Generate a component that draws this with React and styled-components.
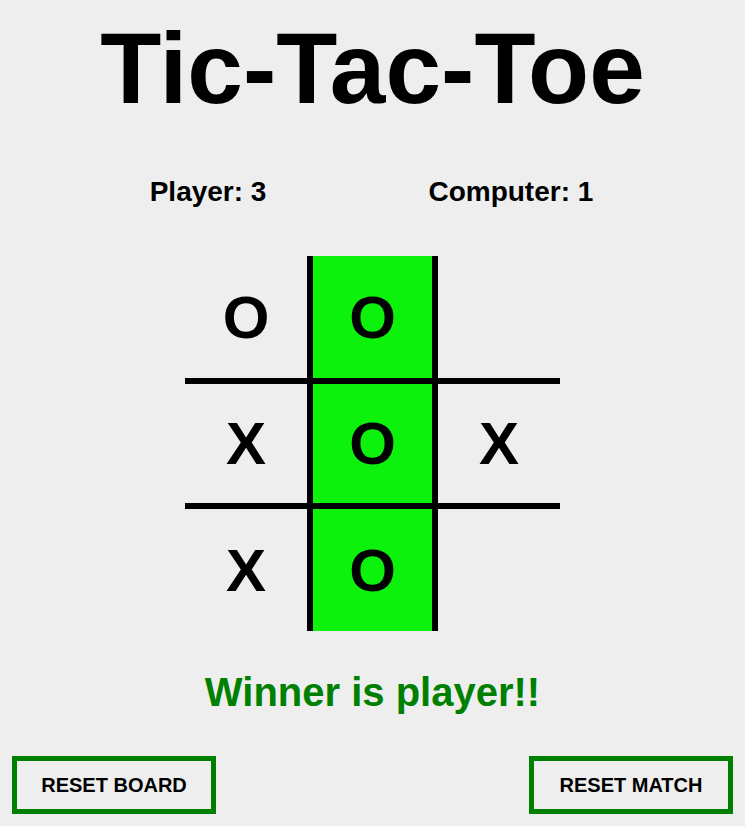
import React from 'react';
import styled, { createGlobalStyle } from 'styled-components';

const board = [
    ['O', 'O', ''],
    ['X', 'O', 'X'],
    ['X', 'O', ''],
];

const winLine = [[0, 1], [1, 1], [2, 1]];

function isWin(row, col) {
    return winLine.some(([r, c]) => r === row && c === col);
}

function App() {
    return (
      <>
        <GlobalStyle />
        <Container>

          <Title>Tic-Tac-Toe</Title>

          <Scores>
            <Score>Player: 3</Score>
            <Score>Computer: 1</Score>
          </Scores>

          <Board>
            {board.map((line, row) =>
              line.map((mark, col) => (
                <Cell key={`${row}-${col}`} row={row} col={col} win={isWin(row, col)}>
                  {mark}
                </Cell>
              ))
            )}
          </Board>

          <Winner>Winner is player!!</Winner>

          <Buttons>
            <ResetButton>RESET BOARD</ResetButton>
            <ResetButton>RESET MATCH</ResetButton>
          </Buttons>

        </Container>
      </>
    );
}

export default App;


const GlobalStyle = createGlobalStyle`
    body {
        margin: 0;
        background: #EEEEEE;
        font-family: 'Liberation Sans', Arial, sans-serif;
    }
`;

const Container = styled.div`
    display: flex;
    flex-direction: column;
    align-items: center;
    min-height: 826px;
`;

const Title = styled.h1`
    margin: 18px 0 0 0;
    font-size: 100px;
    line-height: 100px;
    font-weight: 700;
    color: #000000;
`;

const Scores = styled.div`
    display: flex;
    justify-content: center;
    gap: 162px;
    margin-top: 60px;
    padding-right: 2px;
`;

const Score = styled.div`
    font-size: 28px;
    line-height: 28px;
    font-weight: 700;
    color: #000000;
`;

const Board = styled.div`
    display: grid;
    grid-template-columns: repeat(3, 125px);
    grid-template-rows: repeat(3, 125px);
    margin-top: 50px;
`;

const Cell = styled.div`
    box-sizing: border-box;
    display: flex;
    align-items: center;
    justify-content: center;
    font-size: 60px;
    font-weight: 700;
    color: #000000;
    background: ${p => (p.win ? '#0DF20D' : 'transparent')};
    border-left: ${p => (p.col > 0 ? '3px solid #000' : 'none')};
    border-right: ${p => (p.col < 2 ? '3px solid #000' : 'none')};
    border-top: ${p => (p.row > 0 ? '3px solid #000' : 'none')};
    border-bottom: ${p => (p.row < 2 ? '3px solid #000' : 'none')};
`;

const Winner = styled.div`
    margin-top: 41px;
    font-size: 40px;
    line-height: 40px;
    font-weight: 700;
    color: #008000;
`;

const Buttons = styled.div`
    align-self: stretch;
    display: flex;
    justify-content: space-between;
    padding: 0 12px;
    margin-top: 44px;
`;

const ResetButton = styled.button`
    box-sizing: border-box;
    width: 204px;
    padding: 14px 0;
    background: transparent;
    border: 5px solid #008000;
    font-family: 'Liberation Sans', Arial, sans-serif;
    font-size: 20px;
    line-height: 20px;
    font-weight: 700;
    color: #000000;
    cursor: pointer;
`;
